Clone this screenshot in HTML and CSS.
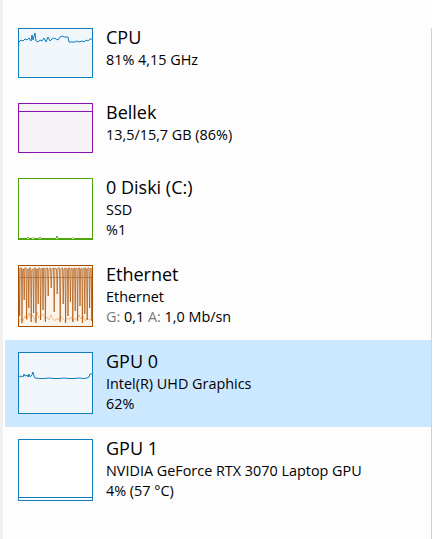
FILE: index.html
```
<!DOCTYPE html>
<html>
<head>
<meta charset="utf-8">
<link rel="stylesheet" href="styles.css">
</head>
<body>
<div class="app">
  <div class="edge"></div>
  <div class="list">
    <div class="row">
      <div class="thumb cpu short">
        <svg viewBox="0 0 73 48" preserveAspectRatio="none"><polyline class="ln-blue" points="0,13 2,11 4,12 6,10 8,11 10,9 12,12 13,6 14,11 16,4 17,12 19,13 21,11 23,12 25,9 27,13 29,8 31,12 33,10 35,9 37,10 39,11 41,8 43,7 45,8 47,8 49,8 50,13 53,13 56,13 58,12 60,13 63,12 65,13 67,11 69,12 71,10 73,10"/></svg>
      </div>
      <div class="info">
        <div class="title">CPU</div>
        <div class="sub">81% 4,15 GHz</div>
      </div>
    </div>
    <div class="row">
      <div class="thumb mem short">
        <svg viewBox="0 0 73 48" preserveAspectRatio="none"><line class="ln-purple" x1="0" y1="7.5" x2="73" y2="7.5"/></svg>
      </div>
      <div class="info">
        <div class="title">Bellek</div>
        <div class="sub">13,5/15,7 GB (86%)</div>
      </div>
    </div>
    <div class="row">
      <div class="thumb disk tall">
        <svg viewBox="0 0 73 60" preserveAspectRatio="none"><polyline class="ln-green" points="0,59.5 8,59.5 9,58 10,59.5 13,59.5 14,58.5 15,59.5 20,59.5 21,58 22,59.5 37,59.5 38,57 39,59.5 53,59.5 54,58.5 55,59.5 73,59.5"/></svg>
      </div>
      <div class="info">
        <div class="title">0 Diski (C:)</div>
        <div class="sub">SSD</div>
        <div class="sub">%1</div>
      </div>
    </div>
    <div class="row">
      <div class="thumb eth tall">
        <svg viewBox="0 0 73 60" preserveAspectRatio="none">
          <line class="ln-tan" x1="0" y1="11.5" x2="73" y2="11.5"/>
          <polyline class="ln-dot" points="0,56 2,53 4,55 6,50 8,54 10,47 12,52 14,49 16,55 18,46 20,52 22,50 24,48 26,53 28,51 30,54 32,49 34,53 36,55 38,52 40,54 42,50 44,53 46,55 48,52 50,54 52,51 54,55 56,52 58,54 60,49 62,53 64,50 66,55 68,52 70,54 73,52"/>
          <polyline class="ln-orange" points="0,2 0.6,50 1.2,2 2.4,2 3,57 3.6,3 4.6,3 5.2,34 5.8,2 7,2 7.6,53 8.2,3 9.2,3 9.8,42 10.4,2 11.6,2 12.2,56 12.8,4 14,3 14.6,47 15.2,2 16.4,2 17,57 17.6,3 18.6,3 19.2,38 19.8,2 21,2 21.6,54 22.2,3 23.4,2 24,44 24.6,2 25.8,3 26.4,56 27,2 28.5,2 29.2,30 29.9,3 31.5,2 32.2,22 32.9,3 34.5,2 35.2,46 35.9,2 37.5,3 38.2,28 38.9,2 40.5,2 41.2,56 41.9,3 43.5,2 44.2,38 44.9,3 46,2 46.6,57 47.2,2 48.4,3 49,50 49.6,2 50.8,2 51.4,36 52,3 53.2,2 53.8,56 54.4,3 55.6,2 56.2,45 56.8,2 58,3 58.6,55 59.2,2 60.4,2 61,40 61.6,3 62.8,2 63.4,57 64,3 65.2,2 65.8,48 66.4,2 67.6,3 68.2,54 68.8,2 70,2 70.6,42 71.2,3 72.2,2 72.8,55 73,10"/>
        </svg>
      </div>
      <div class="info">
        <div class="title">Ethernet</div>
        <div class="sub">Ethernet</div>
        <div class="sub"><span class="lbl">G:</span> 0,1 <span class="lbl">A:</span> 1,0 Mb/sn</div>
      </div>
    </div>
    <div class="row selected">
      <div class="thumb gpu tall">
        <svg viewBox="0 0 73 60" preserveAspectRatio="none"><polyline class="ln-blue" points="0,24 2,23 4,24 5,21 6,23 8,22 9,24 10,21 11,24 13,22 14,19 15,23 16,25 20,25.5 25,25.5 30,25 35,25.5 40,25.5 45,25 50,25.5 55,25.5 60,25 65,25.5 68,25 70,24 71,21 73,21"/></svg>
      </div>
      <div class="info">
        <div class="title">GPU 0</div>
        <div class="sub">Intel(R) UHD Graphics</div>
        <div class="sub">62%</div>
      </div>
    </div>
    <div class="row">
      <div class="thumb gpu1 tall">
        <svg viewBox="0 0 73 60" preserveAspectRatio="none"><line class="ln-blue" x1="0" y1="57.5" x2="73" y2="57.5"/></svg>
      </div>
      <div class="info">
        <div class="title">GPU 1</div>
        <div class="sub">NVIDIA GeForce RTX 3070 Laptop GPU</div>
        <div class="sub">4% (57 °C)</div>
      </div>
    </div>
  </div>
  <div class="track"></div>
</div>
</body>
</html>
```
FILE: styles.css
```
html, body {
  margin: 0;
  padding: 0;
  background: #ffffff;
}
body {
  font-family: "Open Sans", "Noto Sans", sans-serif;
  color: #000;
}
.app {
  display: flex;
  width: 438px;
  height: 539px;
  overflow: hidden;
}
.edge {
  width: 3px;
  background: #f0f0f0;
  flex: none;
}
.list {
  width: 426px;
  margin-left: 2px;
  padding-top: 16px;
  flex: none;
  background: #fdfdfd;
}
.track {
  margin-top: 28px;
  border-left: 1px solid #d2d2d2;
  flex: 1;
  background: #fff;
}
.row {
  display: flex;
  align-items: flex-start;
  padding: 12px 0 13px 13px;
}
.row.selected {
  background: #cce8ff;
}
.thumb {
  width: 73px;
  border: 1px solid #117dbb;
  flex: none;
}
.thumb svg {
  display: block;
  width: 73px;
  height: 100%;
}
.short { height: 48px; }
.tall { height: 60px; }
.cpu { border-color: #117dbb; background: #f1f6fa; }
.gpu { border-color: #117dbb; background: #f1f6fa; }
.gpu1 { border-color: #117dbb; background: #ffffff; }
.mem { border-color: #8b12ae; background: #f4f2f4; }
.disk { border-color: #4da60c; background: #ffffff; }
.eth { border-color: #a74f01; background: #fcf3eb; }
.ln-blue { fill: none; stroke: #117dbb; stroke-width: 1; }
.ln-purple { stroke: #8b12ae; stroke-width: 1; }
.ln-green { fill: none; stroke: #4da60c; stroke-width: 1; }
.ln-tan { stroke: #c8a082; stroke-width: 1; }
.ln-orange { fill: none; stroke: #a74f01; stroke-width: 0.7; stroke-linejoin: bevel; }
.ln-dot { fill: none; stroke: #f08a3c; stroke-width: 1; stroke-dasharray: 1 1; }
.info {
  margin-left: 13px;
  margin-top: -3px;
}
.title {
  font-size: 18px;
  line-height: 25px;
}
.sub {
  font-size: 14.4px;
  line-height: 20px;
}
.lbl {
  color: #7a7a7a;
}
```
